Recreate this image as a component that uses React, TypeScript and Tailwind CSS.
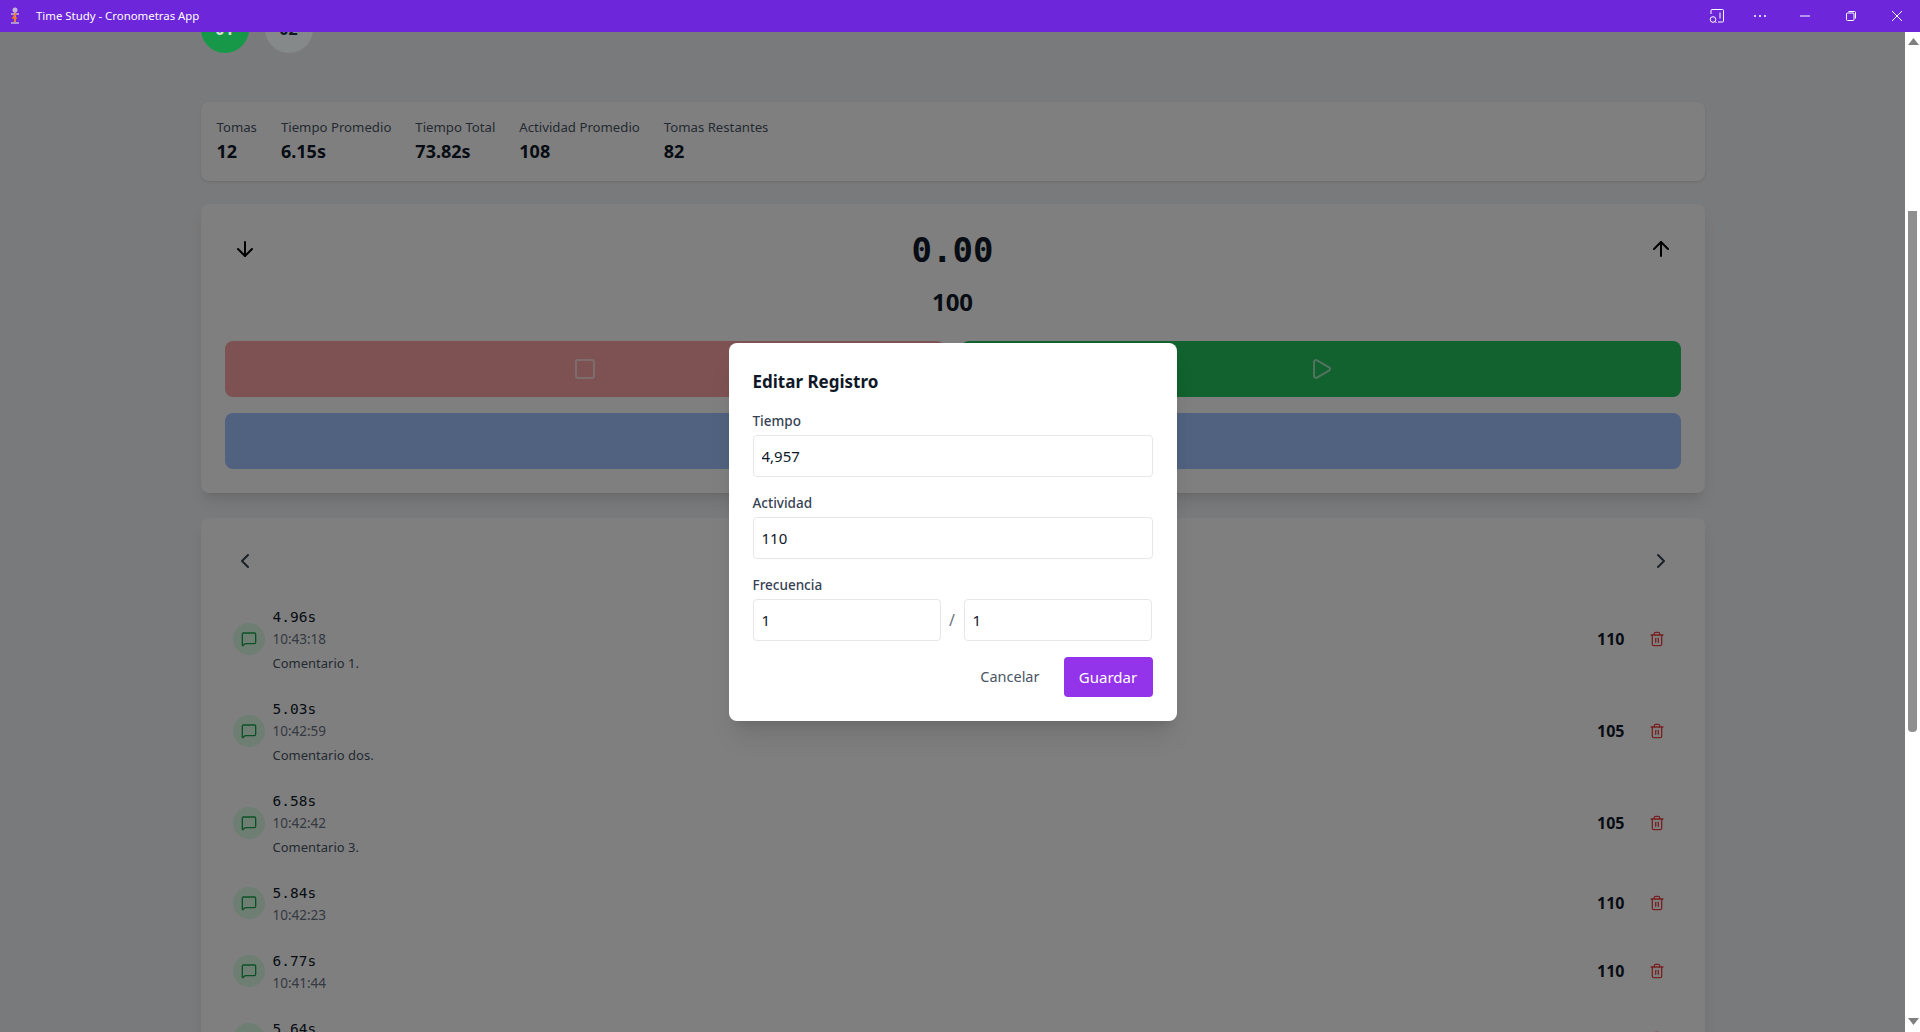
import React from "react";
import { ArrowDown, ArrowUp, ChevronLeft, ChevronRight, MessageSquare, Play, Square, Trash2 } from "lucide-react";

const stats = [
  ["Tomas", "12"],
  ["Tiempo Promedio", "6.15s"],
  ["Tiempo Total", "73.82s"],
  ["Actividad Promedio", "108"],
  ["Tomas Restantes", "82"],
];

const rows = [
  { t: "4.96s", h: "10:43:18", c: "Comentario 1.", a: "110" },
  { t: "5.03s", h: "10:42:59", c: "Comentario dos.", a: "105" },
  { t: "6.58s", h: "10:42:42", c: "Comentario 3.", a: "105" },
  { t: "5.84s", h: "10:42:23", a: "110" },
  { t: "6.77s", h: "10:41:44", a: "110" },
  { t: "5.64s", h: "10:41:20", a: "110" },
];

function Field({ label, value }: { label: string; value: string }) {
  return (
    <div className="mb-4">
      <div className="text-[13.5px] leading-5 font-medium text-gray-700 mb-1">{label}</div>
      <input readOnly value={value} className="w-full h-[42px] px-2 border border-gray-200 rounded text-[15px] text-gray-900 outline-none" />
    </div>
  );
}

export default function App() {
  return (
    <div className="h-[1032px] flex flex-col overflow-hidden bg-white font-['Noto_Sans','Open_Sans',sans-serif]">
      <header className="h-8 shrink-0 flex items-center bg-[#6d26d9] text-white">
        <svg width="16" height="20" viewBox="0 0 16 20" className="ml-[7px]">
          <circle cx="8" cy="4" r="2.500" fill="#c4b5d8" />
          <path d="M4 8h8M8 6v10M4 17h8" stroke="#c4b5d8" strokeWidth="1.500" fill="none" />
          <path d="M9 7l-3 5h3l-2 4" stroke="#f97316" strokeWidth="1.600" fill="none" />
        </svg>
        <span className="ml-[13px] text-[11.4px]">Time Study - Cronometras App</span>
        <div className="ml-auto flex items-center">
          <svg width="16" height="16" viewBox="0 0 16 16" fill="none" stroke="white" strokeWidth="1" className="mr-[28px]">
            <path d="M2 6V2.500A1 1 0 0 1 3 1.500h10.500a1 1 0 0 1 1 1V13a1 1 0 0 1-1 1H9" />
            <path d="M11 4.500v6" />
            <circle cx="4" cy="11.500" r="2.800" />
            <path d="M6 13.500l1.500 1.500" />
          </svg>
          <svg width="14" height="4" viewBox="0 0 14 4" fill="white" className="mr-[32px]">
            <circle cx="2" cy="2" r="1" /><circle cx="7" cy="2" r="1" /><circle cx="12" cy="2" r="1" />
          </svg>
          <svg width="12" height="12" viewBox="0 0 12 12" fill="none" stroke="white" className="mr-[34px]">
            <path d="M1 6h10" />
          </svg>
          <svg width="12" height="12" viewBox="0 0 12 12" fill="none" stroke="white" className="mr-[34px]">
            <rect x="1.500" y="3" width="7.500" height="7.500" rx="1" />
            <path d="M3.500 1.500h6a1 1 0 0 1 1 1v6" />
          </svg>
          <svg width="12" height="12" viewBox="0 0 12 12" fill="none" stroke="white" className="mr-[17px]">
            <path d="M1 1l10 10M11 1L1 11" />
          </svg>
        </div>
      </header>

      <div className="flex-1 min-h-0 flex">
        <div className="relative w-[1905px] overflow-hidden bg-[#f3f4f6]">
          <main className="w-[1504px] mx-auto -mt-[27px]">
            <div className="flex gap-4 mb-[49px]">
              <div className="relative z-10 w-12 h-12 rounded-full bg-[#179848] flex items-center justify-center font-bold text-[#cfe6d6]">01</div>
              <div className="relative z-10 w-12 h-12 rounded-full bg-[#85898a] flex items-center justify-center font-bold text-gray-900">02</div>
            </div>

            <section className="h-[79px] bg-white rounded-lg shadow-sm px-4 pt-[15px] flex gap-6 mb-[23px]">
              {stats.map(([label, value]) => (
                <div key={label}>
                  <div className="text-[13.2px] leading-5 text-gray-600 whitespace-nowrap">{label}</div>
                  <div className="text-lg leading-7 font-bold text-gray-900">{value}</div>
                </div>
              ))}
            </section>

            <section className="h-[289px] bg-white rounded-lg shadow-lg px-6 mb-[25px]">
              <div className="h-[137px] relative flex flex-col items-center pt-[26px]">
                <div className="text-[34px] leading-10 font-bold text-gray-900 font-['DejaVu_Sans_Mono',monospace]">0.00</div>
                <div className="mt-[16px] text-2xl leading-8 font-bold text-gray-900">100</div>
                <ArrowDown className="absolute left-[8px] top-[33px] text-black" size={24} />
                <ArrowUp className="absolute right-[8px] top-[33px] text-black" size={24} />
              </div>
              <div className="flex gap-4 mb-4">
                <div className="flex-1 h-14 rounded-lg bg-[#fca5a5] flex items-center justify-center">
                  <Square size={24} strokeWidth={2} className="text-white opacity-60" />
                </div>
                <div className="flex-1 h-14 rounded-lg bg-[#22c55e] flex items-center justify-center">
                  <Play size={24} strokeWidth={2} className="text-white opacity-60" />
                </div>
              </div>
              <div className="h-14 rounded-lg bg-[#a0c4ff]" />
            </section>

            <section className="bg-white rounded-lg shadow-lg px-6 pt-[24px] h-[620px]">
              <div className="flex justify-between px-[8px] h-[38px] items-center mb-[13px]">
                <ChevronLeft size={24} className="text-gray-700" />
                <ChevronRight size={24} className="text-gray-700" />
              </div>
              {rows.map((r) => (
                <div key={r.t} className={`flex items-center pl-[8px] pr-[16px] ${r.c ? "h-[92px]" : "h-[68px]"}`}>
                  <div className="w-8 h-8 rounded-full bg-[#dcfce7] flex items-center justify-center">
                    <MessageSquare size={16} className="text-[#16a34a]" />
                  </div>
                  <div className="ml-2 pt-[2px]">
                    <div className="text-[14.500px] leading-5 text-gray-900 font-['DejaVu_Sans_Mono',monospace]">{r.t}</div>
                    <div className="text-[13.500px] leading-5 text-gray-500 mt-[2px]">{r.h}</div>
                    {r.c && <div className="text-[13px] leading-5 text-gray-600 mt-[4px]">{r.c}</div>}
                  </div>
                  <div className="ml-auto font-bold text-base text-gray-900">{r.a}</div>
                  <Trash2 size={16} className="ml-[24px] text-[#ef4444]" />
                </div>
              ))}
            </section>
          </main>

          <div className="absolute inset-0 bg-black/50 flex items-center justify-center">
            <div className="w-[448px] h-[378px] bg-white rounded-lg shadow-xl p-6">
              <h2 className="text-[17px] leading-7 font-bold text-gray-900 mt-px mb-[15px]">Editar Registro</h2>
              <Field label="Tiempo" value="4,957" />
              <Field label="Actividad" value="110" />
              <div className="text-[13.5px] leading-5 font-medium text-gray-700 mb-1">Frecuencia</div>
              <div className="flex items-center mb-4">
                <input readOnly value="1" className="w-[188px] h-[42px] px-2 border border-gray-200 rounded text-[15px] text-gray-900 outline-none" />
                <span className="w-[23px] text-center text-gray-500">/</span>
                <input readOnly value="1" className="w-[188px] h-[42px] px-2 border border-gray-200 rounded text-[15px] text-gray-900 outline-none" />
              </div>
              <div className="flex justify-end items-center">
                <span className="text-[14.500px] text-gray-600 mr-6">Cancelar</span>
                <span className="w-[89px] h-10 rounded bg-[#9333ea] text-white flex items-center justify-center text-[15px]">Guardar</span>
              </div>
            </div>
          </div>
        </div>

        <div className="w-[15px] relative bg-white">
          <svg width="11" height="7" viewBox="0 0 11 7" className="absolute left-[3px] top-[6px]"><path d="M5.500 0L11 7H0z" fill="#808080" /></svg>
          <div className="absolute left-[3px] top-[179px] w-[9px] h-[521px] rounded-b bg-[#8f8f8f]" />
          <svg width="11" height="7" viewBox="0 0 11 7" className="absolute left-[3px] bottom-[7px]"><path d="M0 0H11L5.500 7z" fill="#808080" /></svg>
        </div>
      </div>
    </div>
  );
}
